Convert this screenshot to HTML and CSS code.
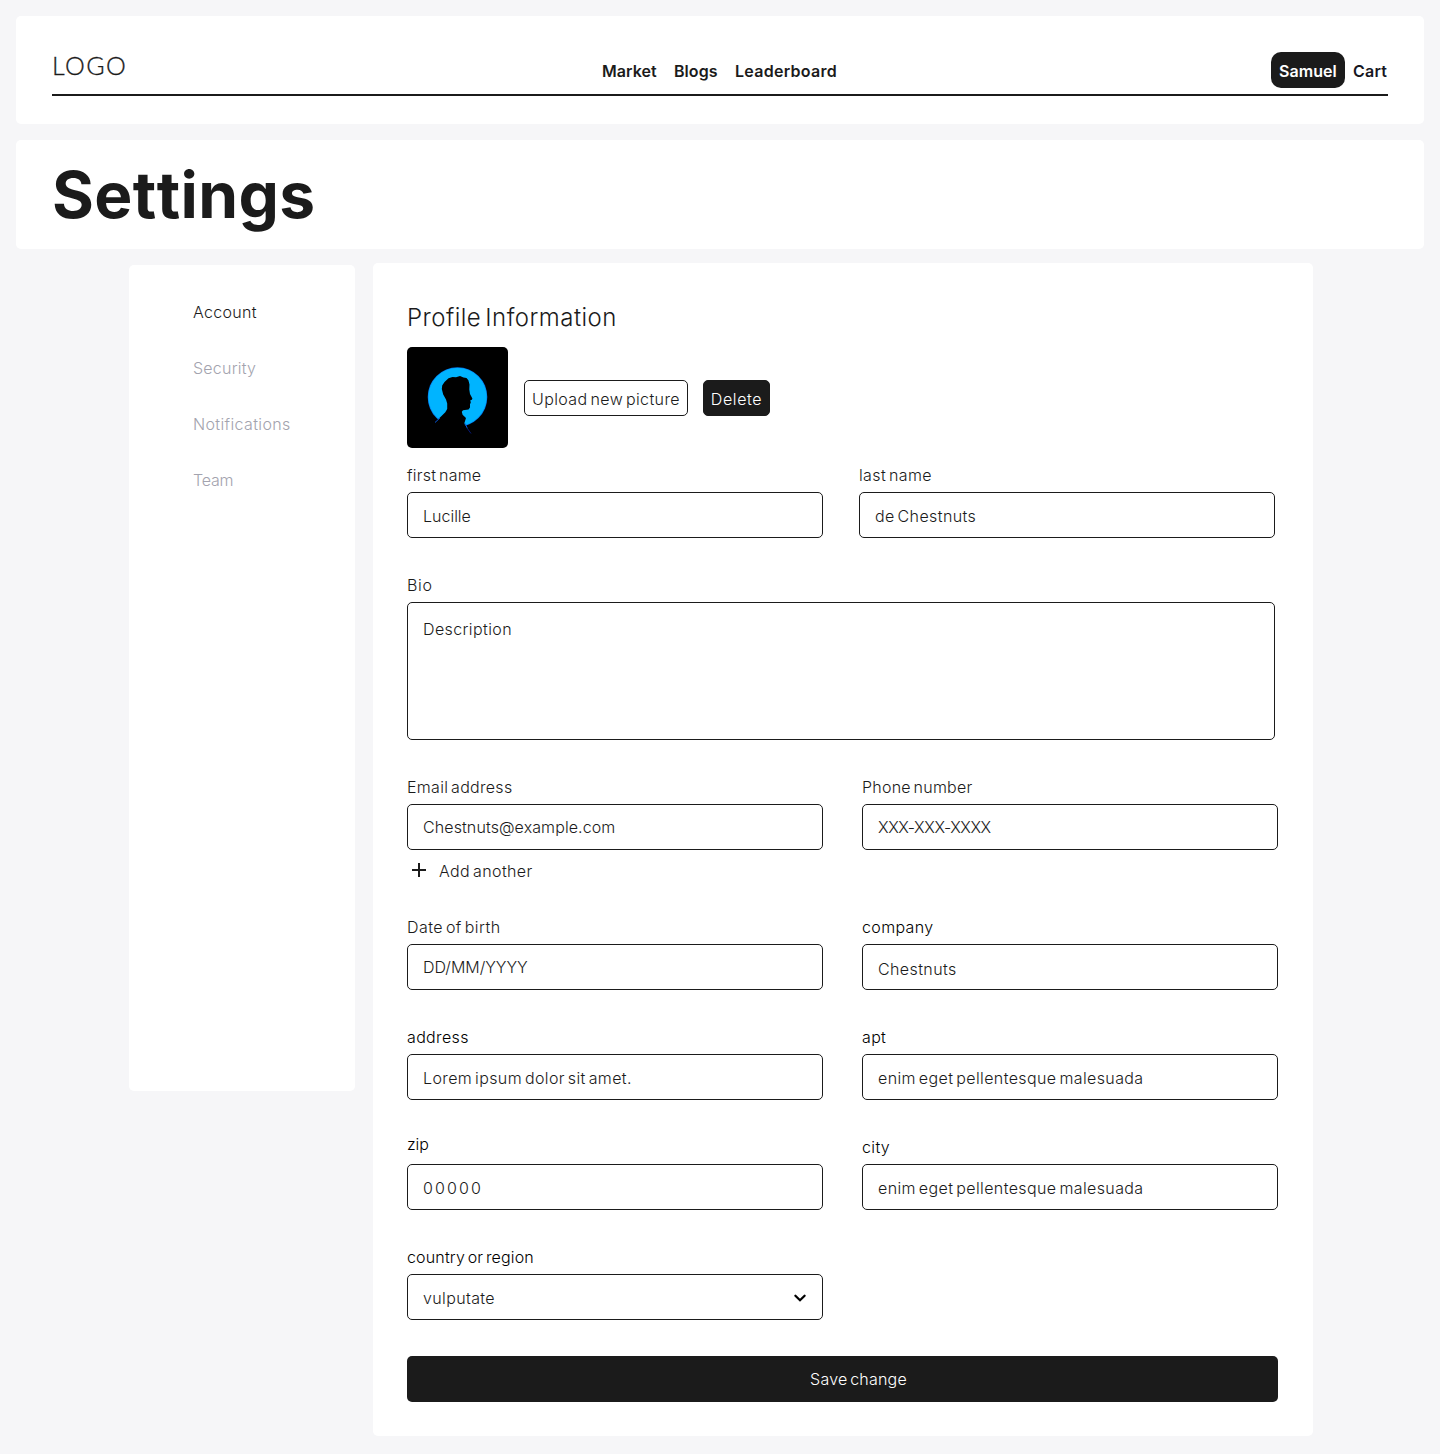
FILE: index.html
```html
<!DOCTYPE html>
<html lang="en">
<head>
<meta charset="utf-8">
<title>Settings</title>
<link rel="stylesheet" href="styles.css">
</head>
<body>
<header class="card header">
  <div class="header-bar">
    <div class="logo">LOGO</div>
    <nav class="nav">
      <a class="nav-market">Market</a>
      <a class="nav-blogs">Blogs</a>
      <a class="nav-leaderboard">Leaderboard</a>
    </nav>
    <div class="user">
      <a class="user-pill">Samuel</a>
      <a class="user-cart">Cart</a>
    </div>
  </div>
</header>

<section class="card title-card">
  <h1 class="title">Settings</h1>
</section>

<div class="layout">
  <aside class="card sidebar">
    <a class="side-link active">Account</a>
    <a class="side-link">Security</a>
    <a class="side-link wide">Notifications</a>
    <a class="side-link tight">Team</a>
  </aside>

  <main class="card main">
    <h2 class="section-title">Profile Information</h2>
    <div class="picture-row">
      <svg class="avatar" viewBox="0 0 101 101">
        <defs>
          <radialGradient id="disc" gradientUnits="userSpaceOnUse" cx="50.5" cy="50" r="30">
            <stop offset="0.95" stop-color="#00b4ff"/>
            <stop offset="1" stop-color="#0065e8"/>
          </radialGradient>
        </defs>
        <rect width="101" height="101" fill="#000"/>
        <circle cx="50.5" cy="50" r="29.8" fill="url(#disc)"/>
        <path fill="#000" d="M28.4 75 34 69.5 38.3 65.2 40.2 62 40.2 56.5 39 52.5 36.2 47.5 34.8 42 35.2 38.5 37.5 35 41.5 31.3 45.5 30 49 30.2 53 29 56.5 30.4 59.5 31 61.4 33.2 62.5 37.5 62.3 42.5 63 47 65.4 51.5 64.9 52.8 63.3 53.3 63.8 55.5 63 57.2 63 60.4 61.5 62.4 56 63.2 54.8 64.8 55.6 67.8 59 71 58.2 73.5 57.4 76 58.4 79.5 64 90 20 90z"/>
        <path fill="none" stroke="#0759dc" stroke-width="1" d="m28 75.5 5-4.6M58.2 76.5l2.2 5"/>
        <path fill="none" stroke="#071a78" stroke-width="1" d="m60.4 81.5 3.6 5"/>
      </svg>
      <button class="btn btn-outline">Upload new picture</button>
      <button class="btn btn-dark">Delete</button>
    </div>

    <form class="form">
      <div class="row row-names">
        <div class="field">
          <label class="label label-first">first name</label>
          <div class="input tight">Lucille</div>
        </div>
        <div class="field">
          <label class="label">last name</label>
          <div class="input">de Chestnuts</div>
        </div>
      </div>

      <div class="field field-bio">
        <label class="label label-bio">Bio</label>
        <div class="textarea">Description</div>
      </div>

      <div class="row">
        <div class="field">
          <label class="label label-email">Email address</label>
          <div class="input input-email">Chestnuts@example.com</div>
          <a class="add">
            <svg class="add-icon" viewBox="0 0 24 24"><path d="M12 5v14M5 12h14" fill="none" stroke="#1b1b1b" stroke-width="2"/></svg>
            <span class="add-text">Add another</span>
          </a>
        </div>
        <div class="field">
          <label class="label label-phone">Phone number</label>
          <div class="input input-phone">XXX-XXX-XXXX</div>
        </div>
      </div>

      <div class="row">
        <div class="field">
          <label class="label label-date">Date of birth</label>
          <div class="input input-date">DD/MM/YYYY</div>
        </div>
        <div class="field">
          <label class="label label-strong">company</label>
          <div class="input input-company">Chestnuts</div>
        </div>
      </div>

      <div class="row">
        <div class="field">
          <label class="label label-strong">address</label>
          <div class="input">Lorem ipsum dolor sit amet.</div>
        </div>
        <div class="field">
          <label class="label label-strong">apt</label>
          <div class="input">enim eget pellentesque malesuada</div>
        </div>
      </div>

      <div class="row">
        <div class="field">
          <label class="label label-strong label-zip">zip</label>
          <div class="input input-zip">00000</div>
        </div>
        <div class="field">
          <label class="label label-strong">city</label>
          <div class="input">enim eget pellentesque malesuada</div>
        </div>
      </div>

      <div class="row">
        <div class="field">
          <label class="label label-strong label-country">country or region</label>
          <div class="input select">
            <span>vulputate</span>
            <svg class="chevron" viewBox="0 0 24 24"><path d="m7.4 9.7 4.6 4.5 4.6-4.5" fill="none" stroke="#000" stroke-width="2.3" stroke-linecap="round"/></svg>
          </div>
        </div>
      </div>

      <button class="save" type="button">Save change</button>
    </form>
  </main>
</div>
</body>
</html>
```
FILE: styles.css
```css
* { box-sizing: border-box; }

body {
  margin: 0;
  padding: 16px 16px 18px;
  background: #f6f6f8;
  color: #1b1b1b;
  font: 340 16px/20px Inter, "Liberation Sans", sans-serif;
  letter-spacing: 0.39px;
  word-spacing: -2px;
}

.card { background: #fff; border-radius: 5px; }

.header { height: 108px; padding: 36px 36px 28px; }
.header-bar {
  display: grid;
  grid-template-columns: 1fr auto 1fr;
  height: 44px;
  border-bottom: 2px solid #1b1b1b;
}
.logo {
  font: 300 25px/26px Lato, Inter, sans-serif;
  letter-spacing: 1.4px;
  -webkit-text-stroke: 0.3px #1b1b1b;
}
.nav, .user {
  display: flex;
  height: 36px;
  font-weight: 600;
  line-height: 34px;
  letter-spacing: 0.05px;
}
.nav { gap: 16px; padding-top: 2px; }
.nav-market { width: 56px; }
.nav-blogs { width: 45px; }
.nav-leaderboard { width: 103px; letter-spacing: 0.27px; }
.user { justify-content: flex-end; gap: 8px; }
.user-pill {
  width: 74px;
  padding: 2px 0 0 8px;
  border-radius: 10px;
  background: #1b1b1b;
  color: #fff;
}
.user-cart { width: 35px; padding-top: 2px; color: #17171f; letter-spacing: 0.25px; }

.title-card { margin-top: 16px; padding: 16px 36px; }
.title {
  margin: 0;
  font-size: 64px;
  line-height: 77px;
  font-weight: 700;
  font-kerning: none;
  letter-spacing: 0.4px;
}

.layout {
  display: flex;
  align-items: flex-start;
  gap: 18px;
  margin: 14px 0 0 113px;
}

.sidebar {
  display: flex;
  flex-direction: column;
  gap: 36px;
  width: 226px;
  height: 826px;
  margin-top: 2px;
  padding: 37px 0 0 64px;
}
.side-link { color: #a3a3ae; letter-spacing: 0.22px; }
.side-link.active { color: #1b1b1b; letter-spacing: 0.3px; }
.side-link.wide { letter-spacing: 0.36px; }
.tight, .side-link.tight { letter-spacing: 0; }
.side-link.tight { letter-spacing: -0.2px; }

.main { width: 940px; padding: 40px 34px 34px; }
.section-title {
  margin: 0;
  font-size: 24px;
  line-height: 30px;
  font-weight: 340;
  letter-spacing: 0.46px;
  word-spacing: -3px;
}

.picture-row { display: flex; align-items: flex-start; margin-top: 14px; }
.avatar { display: block; width: 101px; height: 101px; border-radius: 5px; }
.btn {
  height: 36px;
  margin-top: 33px;
  padding: 2px 0 0;
  border: 1px solid #1b1b1b;
  border-radius: 5px;
  font: inherit;
  letter-spacing: inherit;
  word-spacing: inherit;
  white-space: nowrap;
}
.btn-outline { width: 164px; margin-left: 16px; background: #fff; color: #1b1b1b; }
.btn-dark { width: 67px; margin-left: 15px; background: #1b1b1b; color: #fff; letter-spacing: 0.6px; }

.form { display: flex; flex-direction: column; gap: 37px; margin-top: 17px; }
.row { display: flex; gap: 39px; }
.row-names { gap: 36px; }
.field { display: flex; flex-direction: column; width: 416px; }
.field-bio { width: 868px; }

.label { height: 20px; margin-bottom: 7px; }
.label-first { letter-spacing: 0.24px; }
.label-bio { letter-spacing: 0.7px; }
.label-email { letter-spacing: 0.3px; }
.label-phone { letter-spacing: 0.24px; }
.label-date { letter-spacing: 0.44px; }
.label-strong { color: #000; font-weight: 360; letter-spacing: 0.35px; }
.label-zip { height: 17px; margin-bottom: 10px; line-height: 14px; letter-spacing: -0.1px; }
.label-country { letter-spacing: 0.16px; }

.input, .textarea {
  border: 1px solid #1b1b1b;
  border-radius: 5px;
  padding-left: 15px;
}
.input { height: 46px; padding-top: 2px; line-height: 42px; }
.input-email, .input-phone, .input-date { padding-top: 0; line-height: 44px; }
.input-email { letter-spacing: 0.1px; }
.input-phone { letter-spacing: -0.45px; }
.input-date { letter-spacing: -0.02px; }
.input-company { padding-top: 4px; line-height: 40px; }
.input-zip { letter-spacing: 2.1px; }
.textarea { height: 138px; padding-top: 16px; }

.add { display: flex; gap: 8px; height: 24px; margin: 8px 0 -2px; }
.add-icon { width: 24px; height: 24px; }
.add-text { padding-top: 3px; }

.select { display: flex; justify-content: space-between; padding-right: 10px; letter-spacing: 0.36px; }
.chevron { width: 24px; height: 24px; margin-top: 9px; }

.save {
  width: 871px;
  height: 46px;
  margin-top: -1px;
  padding: 0 0 0 32px;
  border: 0;
  border-radius: 5px;
  background: #1b1b1b;
  color: #fff;
  font: inherit;
  letter-spacing: 0.22px;
  word-spacing: inherit;
}
```
